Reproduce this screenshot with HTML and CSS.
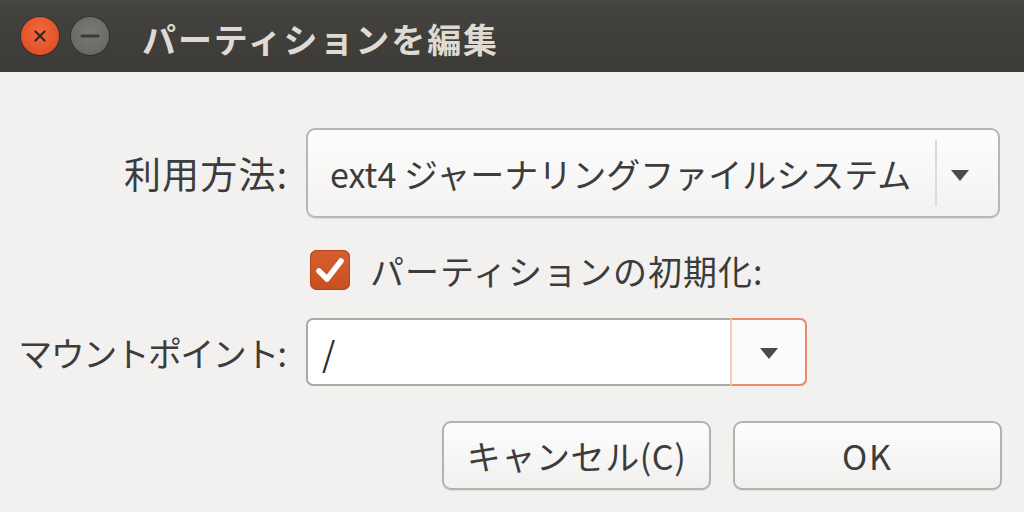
FILE: index.html
```html
<!DOCTYPE html>
<html lang="ja">
<head>
<meta charset="utf-8">
<link rel="stylesheet" href="styles.css">
</head>
<body>
<div class="window">
  <div class="titlebar">
    <span class="wbtn close"><svg viewBox="0 0 38 38" width="38" height="38"><path d="M14.5 14.5 L23.5 23.5 M23.5 14.5 L14.5 23.5" stroke="#3a2a22" stroke-width="2.4" stroke-linecap="round"/></svg></span>
    <span class="wbtn min"><svg viewBox="0 0 38 38" width="38" height="38"><path d="M11 19 H27" stroke="#3b3a37" stroke-width="3.2" stroke-linecap="round"/></svg></span>
    <span class="title">パーティションを編集</span>
  </div>
  <div class="content">
    <div class="form">
      <div class="label wide">利用方法:</div>
      <div class="combo">
        <span class="combo-text">ext4 ジャーナリングファイルシステム</span>
        <span class="sep"></span>
        <span class="arrow"></span>
      </div>
      <div class="spacer"></div>
      <div class="check-row">
        <span class="checkbox"><svg viewBox="0 0 40 40" width="40" height="40"><path d="M9 21 L17 29 L31 11" fill="none" stroke="#ffffff" stroke-width="5.5" stroke-linecap="round" stroke-linejoin="round"/></svg></span>
        <span class="check-label">パーティションの初期化:</span>
      </div>
      <div class="label narrow">マウントポイント:</div>
      <div class="entry">
        <span class="entry-text">/</span>
        <span class="entry-btn"><span class="arrow"></span></span>
      </div>
    </div>
    <div class="buttons">
      <button class="btn cancel">キャンセル(C)</button>
      <button class="btn ok">OK</button>
    </div>
  </div>
</div>
</body>
</html>
```
FILE: styles.css
```css
html, body {
  margin: 0;
  padding: 0;
  width: 1024px;
  height: 512px;
  overflow: hidden;
  background: #f2f1f0;
  font-family: "Noto Sans CJK JP", "Noto Sans", sans-serif;
}
.window {
  width: 1024px;
  height: 512px;
  display: flex;
  flex-direction: column;
}
.titlebar {
  height: 72px;
  flex: none;
  background: linear-gradient(#4a4945 0px, #43423e 6px, #3c3b37 72px);
  display: flex;
  align-items: center;
  padding-left: 21px;
  box-sizing: border-box;
}
.wbtn {
  width: 38px;
  height: 38px;
  border-radius: 50%;
  display: flex;
  margin-right: 12px;
  box-shadow: 0 0 0 1px rgba(0,0,0,0.25);
}
.wbtn.close {
  background: radial-gradient(circle at 50% 40%, #f26a3c, #e25128 70%, #d0481f);
}
.wbtn.min {
  background: radial-gradient(circle at 50% 40%, #7a7975, #6a6965 70%, #5d5c58);
}
.title {
  margin-left: 21px;
  color: #dfdbd2;
  font-size: 34px;
  font-weight: bold;
  letter-spacing: 1.9px;
  margin-top: 4px;
}
.content {
  flex: 1;
  padding-top: 56px;
  display: flex;
  flex-direction: column;
}
.form {
  display: grid;
  grid-template-columns: 287px 694px;
  column-gap: 19px;
}
.label {
  text-align: right;
  font-size: 34px;
  color: #3c3c3c;
  display: flex;
  align-items: center;
  justify-content: flex-end;
  white-space: nowrap;
}
.label.wide {
  font-size: 37px;
  letter-spacing: 1.2px;
  margin-right: -1.2px;
}
.label.narrow {
  letter-spacing: -1.6px;
  margin-right: 1.6px;
}
.combo {
  height: 90px;
  box-sizing: border-box;
  border: 2px solid #b8b7b4;
  border-radius: 9px;
  background: linear-gradient(#fdfdfd, #f3f2f1);
  display: flex;
  align-items: center;
  padding-left: 22px;
  box-shadow: 0 1px 1px rgba(0,0,0,0.08);
}
.combo-text {
  font-size: 34px;
  color: #3c3c3c;
  flex: 1;
  white-space: nowrap;
}
.sep {
  width: 2px;
  height: 66px;
  background: #dcdbd9;
  margin-right: 14px;
}
.arrow {
  width: 0;
  height: 0;
  border-left: 9px solid transparent;
  border-right: 9px solid transparent;
  border-top: 11px solid #4a4a4a;
  margin-right: 29px;
  margin-top: 4px;
}
.spacer {
  height: 100px;
}
.check-row {
  display: flex;
  align-items: center;
  margin-left: 4px;
  margin-top: 32px;
  height: 40px;
  grid-row: 2;
  grid-column: 2;
  align-self: start;
}
.checkbox {
  width: 40px;
  height: 40px;
  border-radius: 7px;
  background: linear-gradient(#d65e30, #c8501f);
  box-shadow: inset 0 0 0 1px #b2451a;
  display: flex;
  flex: none;
}
.check-label {
  margin-left: 20px;
  font-size: 34px;
  letter-spacing: 1px;
  color: #3c3c3c;
  white-space: nowrap;
}
.entry {
  width: 501px;
  height: 68px;
  box-sizing: border-box;
  border: 2px solid #a9a8a5;
  border-right: none;
  border-radius: 7px;
  background: #ffffff;
  display: flex;
  align-items: stretch;
}
.entry-text {
  flex: 1;
  font-size: 34px;
  color: #2e2e2e;
  padding-left: 14px;
  display: flex;
  align-items: center;
}
.entry-btn {
  width: 77px;
  margin: -2px 0;
  box-sizing: border-box;
  border: 2px solid #ec8a6b;
  border-left: 2px solid #f6cdbf;
  border-radius: 0 7px 7px 0;
  background: #fbfbfb;
  display: flex;
  align-items: center;
  justify-content: center;
}
.entry-btn .arrow {
  margin: 2px 0 0 0;
}
.buttons {
  display: flex;
  justify-content: flex-end;
  gap: 22px;
  padding-right: 22px;
  margin-top: 35px;
}
.btn {
  width: 269px;
  height: 69px;
  box-sizing: border-box;
  border: 2px solid #b3b2af;
  border-radius: 9px;
  background: linear-gradient(#fdfdfd, #f1f0ef);
  font-family: "Noto Sans CJK JP", "Noto Sans", sans-serif;
  font-size: 34px;
  color: #3c3c3c;
  padding: 0;
  box-shadow: 0 1px 1px rgba(0,0,0,0.08);
  white-space: nowrap;
}
.btn.cancel {
  letter-spacing: 0.6px;
}
.btn.ok {
  letter-spacing: 2px;
}
```
